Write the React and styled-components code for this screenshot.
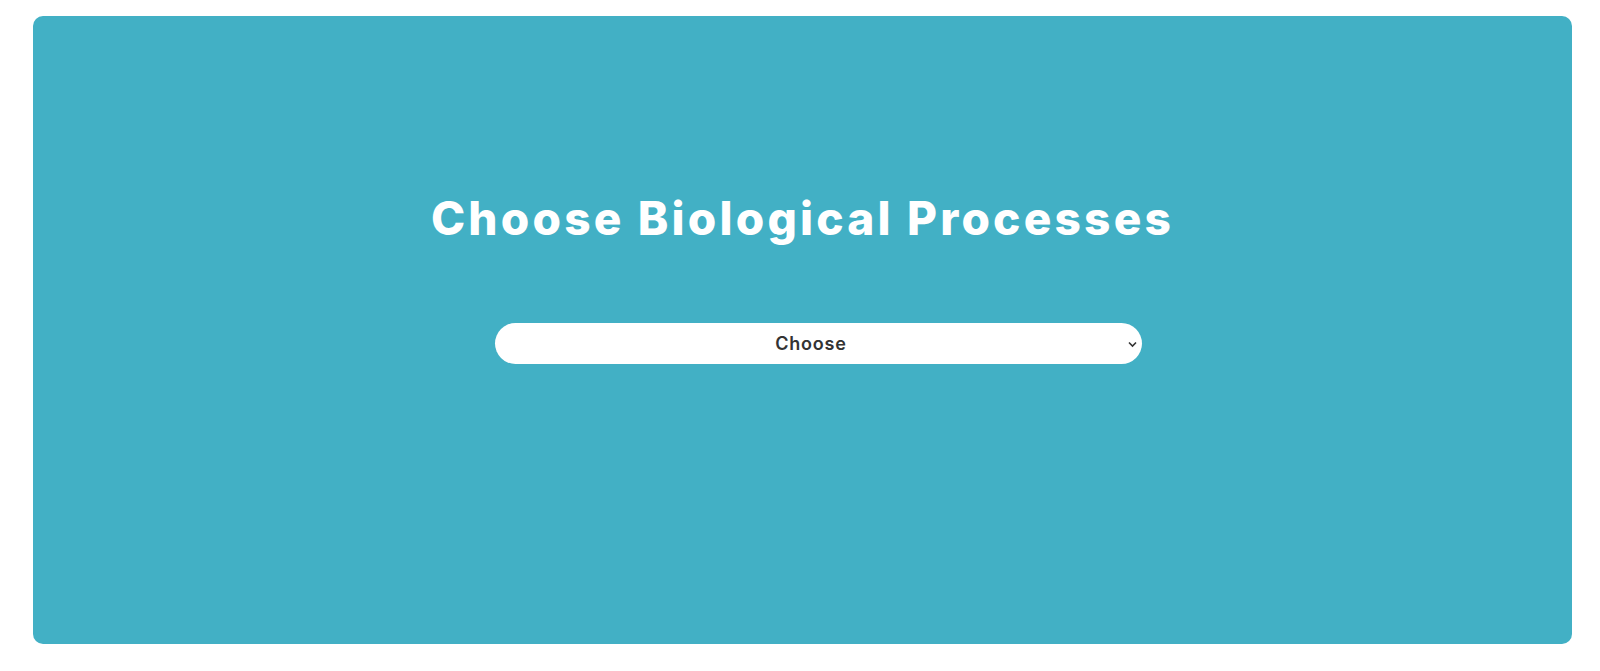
import React from 'react';
import styled, { createGlobalStyle } from 'styled-components';

const GlobalStyle = createGlobalStyle`
  html, body {
    margin: 0;
    padding: 0;
    background: #fff;
    font-family: Inter, "Liberation Sans", sans-serif;
  }
`;

const Page = styled.div`
  padding: 16px 28px 27px 33px;
`;

const Panel = styled.section`
  height: 628px;
  box-sizing: border-box;
  background: #42b0c5;
  border-radius: 10px;
  padding-top: 170px;
  display: flex;
  flex-direction: column;
  align-items: center;
`;

const Title = styled.h1`
  margin: 0;
  color: #fff;
  font-family: Inter, "Liberation Sans", sans-serif;
  font-weight: 800;
  font-size: 46px;
  line-height: 64px;
  letter-spacing: 3.2px;
`;

const SelectWrap = styled.div`
  position: relative;
  width: 647px;
  height: 41px;
  margin-top: 73px;
  margin-left: 32px;
`;

const Select = styled.select`
  appearance: none;
  width: 100%;
  height: 100%;
  border: none;
  border-radius: 21px;
  background: #fff;
  color: #333;
  font-family: Inter, "Liberation Sans", sans-serif;
  font-weight: 600;
  font-size: 18px;
  letter-spacing: 0.8px;
  text-align: center;
  text-align-last: center;
  padding: 0 23px 0 8px;
  outline: none;
`;

const Chevron = styled.svg`
  position: absolute;
  right: 5px;
  top: 18px;
  width: 9px;
  height: 7px;
  pointer-events: none;
`;

export default function App() {
  return (
    <Page>
      <GlobalStyle />
      <Panel>
        <Title>Choose Biological Processes</Title>
        <SelectWrap>
          <Select defaultValue="">
            <option value="">Choose</option>
          </Select>
          <Chevron viewBox="0 0 9 7">
            <path d="M1 1.5 L4.5 5 L8 1.5" fill="none" stroke="#333" strokeWidth="1.6" />
          </Chevron>
        </SelectWrap>
      </Panel>
    </Page>
  );
}
